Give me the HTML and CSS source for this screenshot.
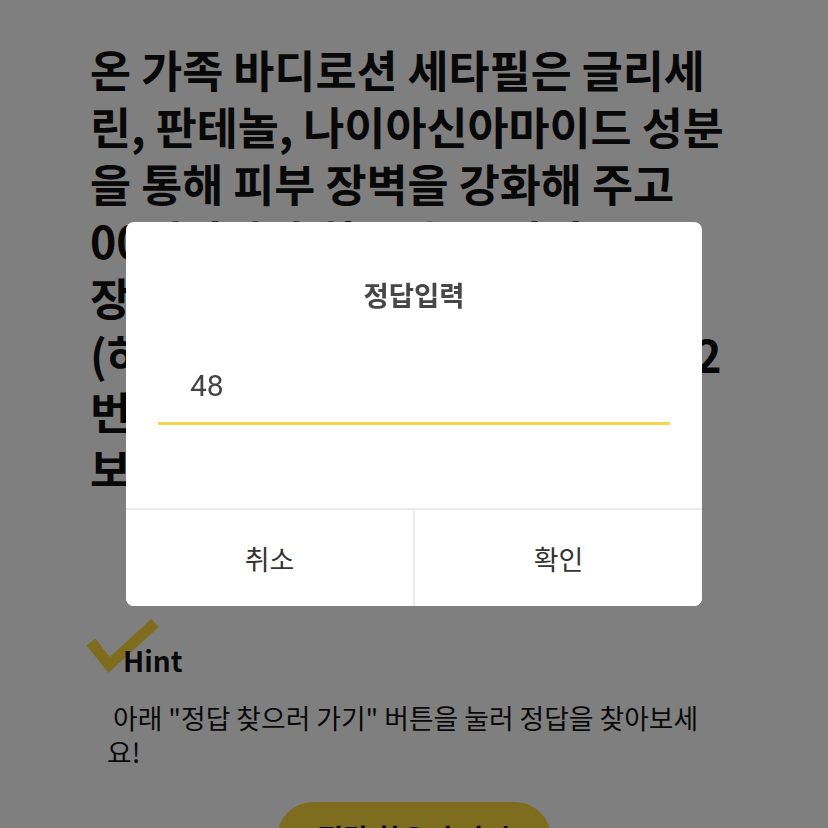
FILE: index.html
```html
<!DOCTYPE html>
<html>
	<head>
		<meta charset='utf-8' />
		<title>정답입력</title>
		<link rel="stylesheet" href="styles.css">
	</head>
	<body>

		<div class="quiz">
			<h1 class="quiz-question">온 가족 바디로션 세타필은 글리세린, 판테놀, 나이아신아마이드 성분을 통해 피부 장벽을 강화해 주고<br />00시간 촉촉한 보습을 지켜주는<br />장벽 크림과 함께 쓰면 좋은 제품<br />(하단 정보를 참고하세요. 정답은 2<br />번째 사진을 확인하세요) 용량은<br />보습 크림은 몇 ml일까요?</h1>

			<div class="hint">
				<div class="hint-title">
					<svg class="hint-check" width="80" height="60" viewBox="0 0 80 60">
						<polyline points="6,24 24,47 70,5" fill="none" stroke="#fedb3e" stroke-width="11" />
					</svg>
					Hint
				</div>
				<p class="hint-text">&nbsp;아래 "정답 찾으러 가기" 버튼을 눌러 정답을 찾아보세요!</p>
			</div>

			<div class="find-btn">정답 찾으러 가기</div>
		</div>

		<div class="dim">
			<div class="dialog">
				<div class="dialog-body">
					<div class="dialog-title">정답입력</div>
					<input id="answer" type="text" class="dialog-input" value="48" />
				</div>
				<div class="dialog-buttons">
					<button type="button" id="cancel" class="dialog-btn">취소</button>
					<button type="button" id="ok" class="dialog-btn dialog-btn-ok">확인</button>
				</div>
			</div>
		</div>

	</body>
</html>
```

FILE: styles.css
```css
body{
	margin:0;
	background-color:#fff;
	font-family:"Noto Sans CJK KR", sans-serif;
	color:#111;
}
.quiz{
	padding:40px 90px 0;
}
.quiz-question{
	margin:0;
	font-size:44.6px;
	font-weight:bold;
	line-height:57px;
}
.hint{
	margin:144px 14px 0 17px;
}
.hint-title{
	position:relative;
	padding-left:16px;
	font-size:28px;
	font-weight:bold;
	line-height:40px;
}
.hint-check{
	position:absolute;
	left:-22px;
	top:-22px;
	z-index:-1;
}
.hint-text{
	margin:21px 0 0;
	font-size:26.8px;
	line-height:34px;
}
.find-btn{
	width:274px;
	height:72px;
	margin:33px auto 0;
	border-radius:36px;
	background-color:#fedb3e;
	font-size:28px;
	font-weight:bold;
	line-height:72px;
	text-align:center;
}
.dim{
	position:fixed;
	top:0;
	left:0;
	right:0;
	bottom:0;
	display:flex;
	align-items:center;
	justify-content:center;
	background-color:rgba(0, 0, 0, 0.5);
}
.dialog{
	width:576px;
	background-color:#fff;
	border-radius:8px;
	overflow:hidden;
}
.dialog-body{
	padding:55px 32px 83px;
}
.dialog-title{
	font-size:27.5px;
	font-weight:bold;
	line-height:34px;
	text-align:center;
	color:#474747;
}
.dialog-input{
	display:block;
	width:100%;
	box-sizing:border-box;
	margin-top:47px;
	padding:8px 0 16px 32px;
	border:none;
	border-bottom:3px solid #f5d54a;
	outline:none;
	font:30px/40px Roboto, sans-serif;
	color:#444;
	caret-color:transparent;
}
.dialog-buttons{
	display:flex;
	border-top:2px solid #ebebeb;
}
.dialog-btn{
	flex:1;
	height:96px;
	border:none;
	background-color:#fff;
	font-family:"Noto Sans CJK KR", sans-serif;
	font-size:27px;
	color:#333;
}
.dialog-btn-ok{
	border-left:2px solid #ebebeb;
}
```
